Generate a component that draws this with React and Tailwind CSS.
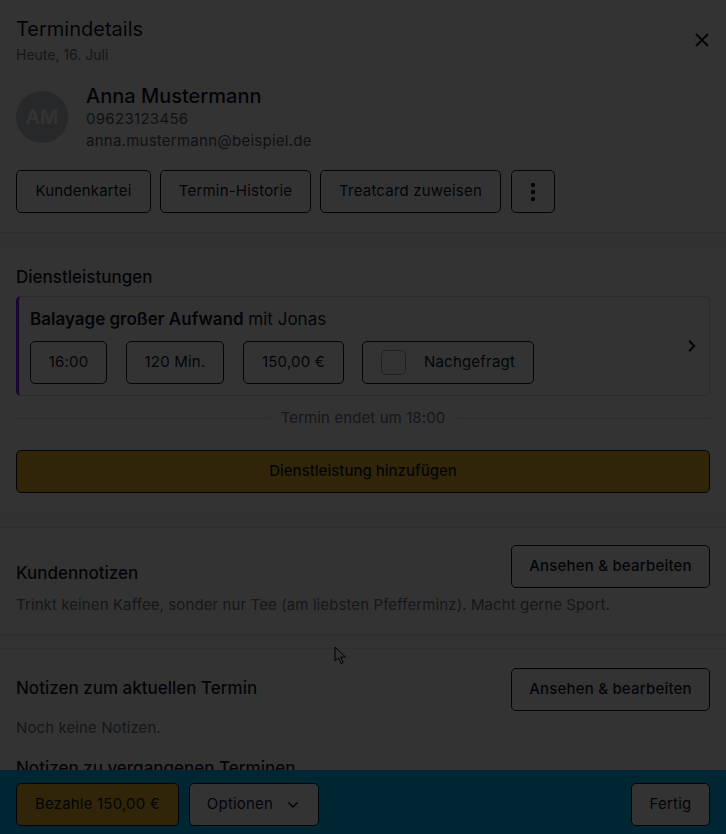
import React from 'react';
import { ChevronRight, ChevronDown } from 'lucide-react';

const topActions = [
  { label: 'Kundenkartei', w: 'w-[135px]' },
  { label: 'Termin-Historie', w: 'w-[151px]' },
  { label: 'Treatcard zuweisen', w: 'w-[181px]' },
];

const chips = [
  { label: '16:00', w: 'w-[77px]' },
  { label: '120 Min.', w: 'w-[98px]' },
  { label: '150,00 €', w: 'w-[101px]' },
];

function OutlineButton({ children, className = '' }) {
  return (
    <button
      className={`h-[43px] shrink-0 rounded-[5px] border-[1.5px] border-gray-900 bg-white text-[15px] tracking-[0.2px] text-gray-900 ${className}`}
    >
      {children}
    </button>
  );
}

function Band() {
  return <div className="h-[15px] border-y border-gray-200 bg-gray-50" />;
}

function NoteSection({ title, text, headingOffset = '' }) {
  return (
    <div className="px-4">
      <div className="flex items-center justify-between">
        <h3 className={`text-[17px] font-medium leading-6 text-gray-900 ${headingOffset}`}>{title}</h3>
        <OutlineButton className="w-[199px] font-medium">Ansehen &amp; bearbeiten</OutlineButton>
      </div>
      <p className="mt-[6px] text-[15px] leading-[22px] tracking-[0.1px] text-gray-500">{text}</p>
    </div>
  );
}

export default function App() {
  return (
    <div
      className="relative flex h-[834px] w-full flex-col overflow-hidden bg-white"
      style={{ fontFamily: 'Inter, "Noto Sans", sans-serif' }}
    >
      {/* Content */}
      <div className="flex-1 overflow-hidden">
        {/* Header */}
        <div className="flex items-start justify-between px-4 pt-[15px]">
          <div>
            <h1 className="text-[20px] leading-7 text-gray-900">Termindetails</h1>
            <p className="mt-[2px] text-[14px] leading-5 text-gray-500">Heute, 16. Juli</p>
          </div>
          <button className="mr-[1px] mt-[18px] text-gray-900">
            <svg width="14" height="14" viewBox="0 0 14 14" fill="none" stroke="currentColor" strokeWidth="2">
              <path d="M1 1L13 13M13 1L1 13" />
            </svg>
          </button>
        </div>

        {/* Customer */}
        <div className="mt-[19px] flex items-start gap-[18px] px-4">
          <div className="mt-[7px] flex h-[52px] w-[52px] items-center justify-center rounded-full bg-[#bfc6d2]">
            <span className="text-[20px] font-semibold text-white">AM</span>
          </div>
          <div>
            <p className="text-[20px] font-medium leading-6 text-gray-900">Anna Mustermann</p>
            <p className="text-[15px] leading-[22px] tracking-[0.3px] text-gray-600">09623123456</p>
            <p className="text-[15px] leading-[22px] tracking-[0.25px] text-gray-600">anna.mustermann@beispiel.de</p>
          </div>
        </div>

        {/* Actions */}
        <div className="mt-[18px] flex gap-[9px] px-4">
          {topActions.map((a) => (
            <OutlineButton key={a.label} className={a.w}>
              {a.label}
            </OutlineButton>
          ))}
          <OutlineButton className="ml-px flex w-[44px] items-center justify-center">
            <svg width="6" height="20" viewBox="0 0 6 20" fill="currentColor">
              <circle cx="3" cy="3" r="2.2" />
              <circle cx="3" cy="10" r="2.2" />
              <circle cx="3" cy="17" r="2.2" />
            </svg>
          </OutlineButton>
        </div>

        <div className="mt-[19px]">
          <Band />
        </div>

        {/* Services */}
        <div className="px-4 pt-[18px]">
          <h2 className="text-[17px] font-medium leading-6 text-gray-900">Dienstleistungen</h2>
          <div className="mt-[7px] flex items-center justify-between rounded-[5px] border border-gray-300 border-l-[3px] border-l-violet-600 pb-[11px] pl-[11px] pr-[8px] pt-[10px]">
            <div>
              <p className="text-[17px] leading-6 text-gray-900">
                <span className="font-semibold">Balayage großer Aufwand</span> mit Jonas
              </p>
              <div className="mt-[10px] flex gap-[19px]">
                {chips.map((c) => (
                  <OutlineButton key={c.label} className={c.w}>
                    {c.label}
                  </OutlineButton>
                ))}
                <OutlineButton className="-ml-px flex w-[172px] items-center gap-[18px] pl-[18px]">
                  <span className="h-[25px] w-[25px] rounded-[5px] border-[1.5px] border-gray-400 bg-white" />
                  <span>Nachgefragt</span>
                </OutlineButton>
              </div>
            </div>
            <ChevronRight size={18} strokeWidth={3} className="text-gray-900" />
          </div>

          <div className="mt-[11px] flex items-center gap-3">
            <div className="h-px flex-1 bg-gray-300" />
            <span className="text-[15px] leading-[22px] tracking-[0.1px] text-gray-500">Termin endet um 18:00</span>
            <div className="h-px flex-1 bg-gray-300" />
          </div>

          <button className="mt-[21px] h-[43px] w-full rounded-[5px] border border-gray-900 bg-[#f2b82d] text-[15px] font-medium text-gray-900">
            Dienstleistung hinzufügen
          </button>
        </div>

        <div className="mt-[20px]">
          <Band />
        </div>

        <div className="pt-[17px]">
          <NoteSection
            title="Kundennotizen"
            headingOffset="mt-[12px]"
            text="Trinkt keinen Kaffee, sonder nur Tee (am liebsten Pfefferminz). Macht gerne Sport."
          />
        </div>

        <div className="mt-[18px]">
          <Band />
        </div>

        <div className="pt-[19px]">
          <NoteSection
            title="Notizen zum aktuellen Termin"
            headingOffset="-mt-[3px]"
            text="Noch keine Notizen."
          />
          <h3 className="mt-[17px] px-4 text-[17px] font-medium leading-6 text-gray-900">
            Notizen zu vergangenen Terminen
          </h3>
        </div>
      </div>

      {/* Footer */}
      <div className="flex h-[64px] shrink-0 items-start justify-between bg-sky-400 px-4 pt-[13px]">
        <div className="flex gap-[10px]">
          <button className="h-[43px] w-[163px] rounded-[5px] border-[1.5px] border-gray-900 bg-[#f2b82d] text-[15px] tracking-[0.2px] text-gray-900">
            Bezahle 150,00 €
          </button>
          <button className="flex h-[43px] w-[130px] items-center justify-center gap-[12px] rounded-[5px] border-[1.5px] border-gray-900 bg-white text-[15px] tracking-[0.2px] text-gray-900">
            Optionen
            <ChevronDown size={16} strokeWidth={2.5} />
          </button>
        </div>
        <OutlineButton className="w-[79px]">Fertig</OutlineButton>
      </div>

      {/* Mouse pointer */}
      <svg
        className="absolute left-[334px] top-[646px]"
        width="13"
        height="19"
        viewBox="0 0 13 19"
      >
        <path d="M1 1L1 15L4.5 11.8L7 17.5L9.2 16.5L6.8 11L11.5 11Z" fill="white" stroke="black" strokeWidth="1" strokeLinejoin="round" />
      </svg>

      {/* Backdrop */}
      <div className="absolute inset-0 bg-black/80" />
    </div>
  );
}
